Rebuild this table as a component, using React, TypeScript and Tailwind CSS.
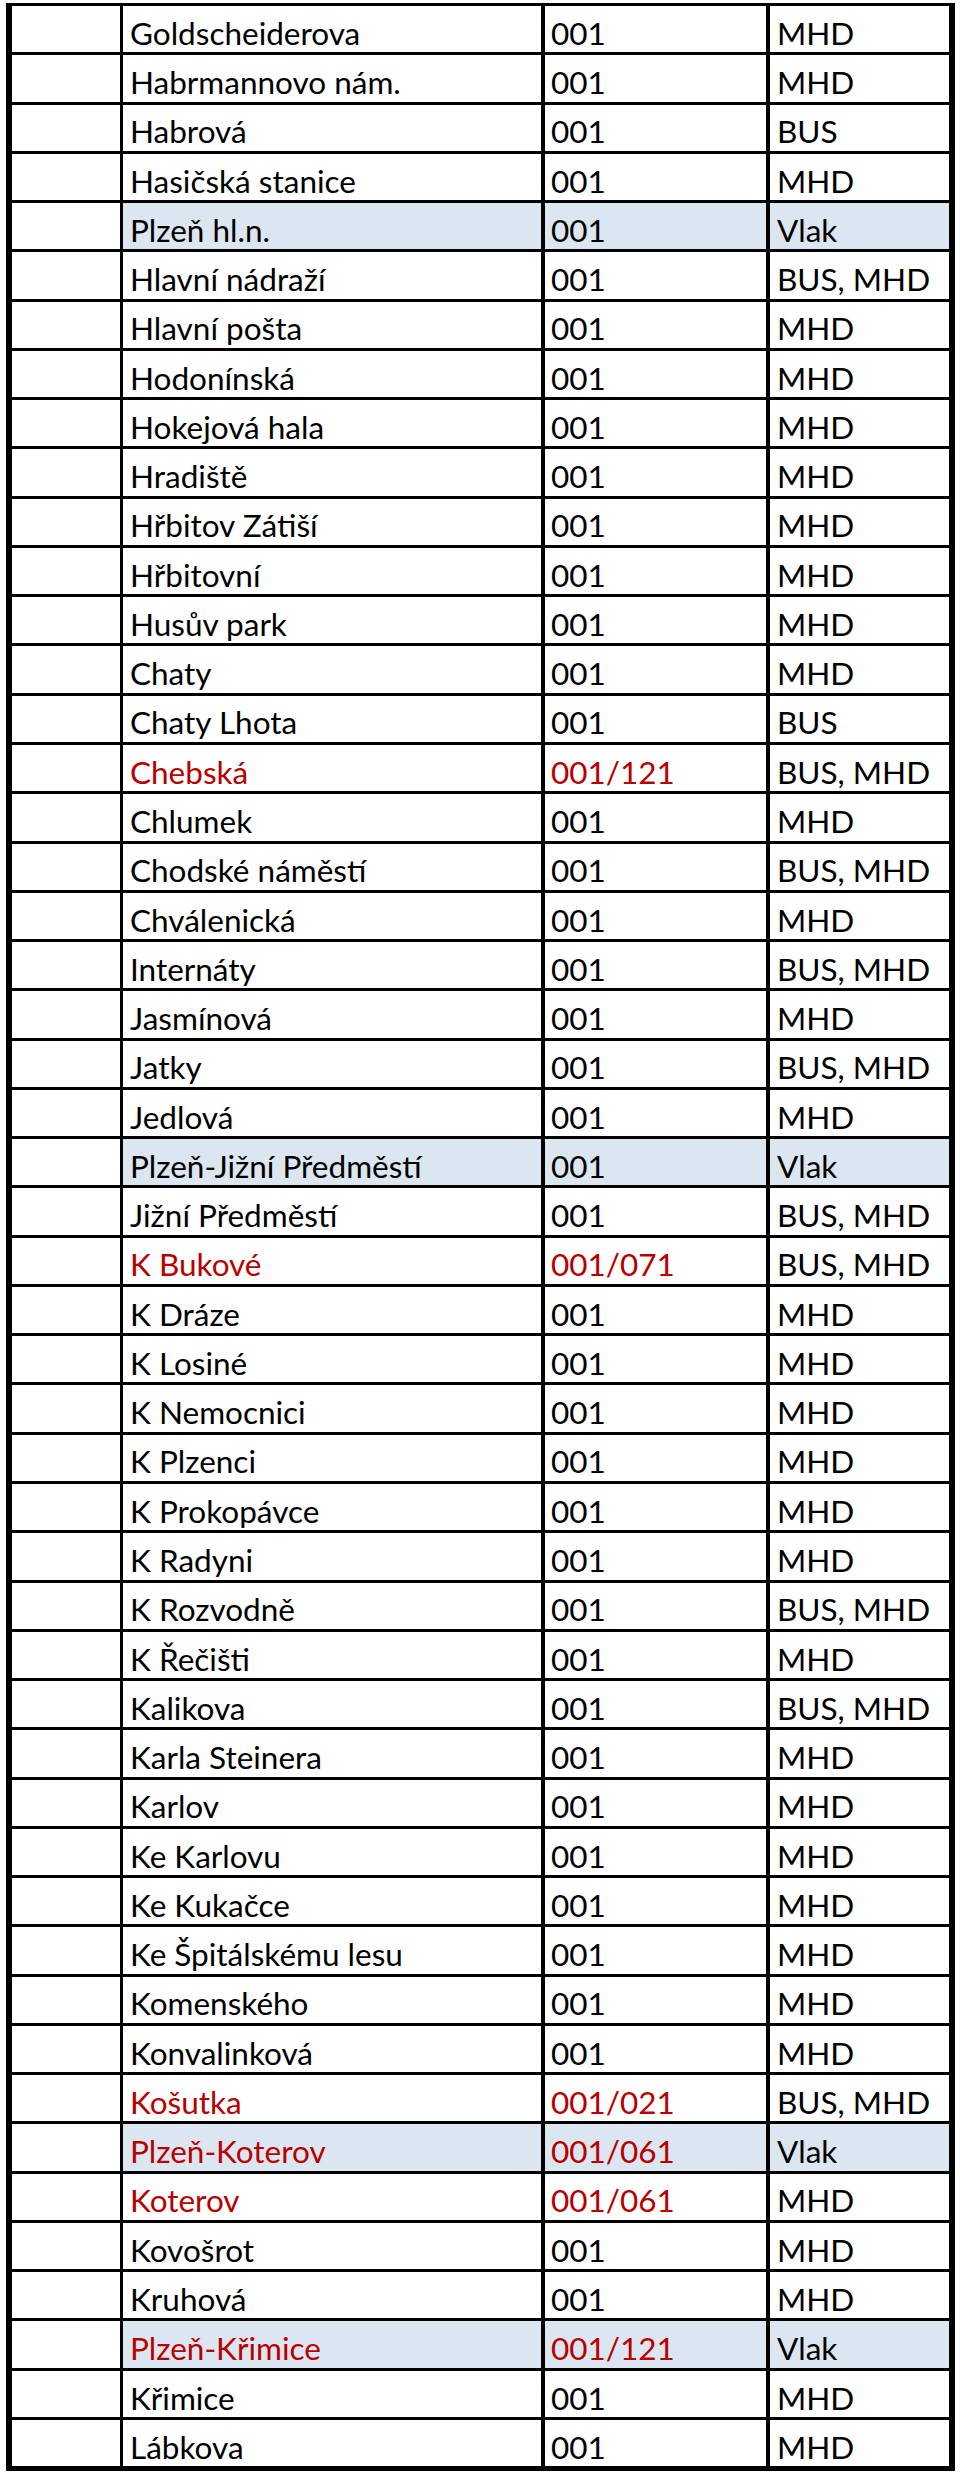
const rows: [string, string, string, number?][] = [
  ['Goldscheiderova', '001', 'MHD'],
  ['Habrmannovo nám.', '001', 'MHD'],
  ['Habrová', '001', 'BUS'],
  ['Hasičská stanice', '001', 'MHD'],
  ['Plzeň hl.n.', '001', 'Vlak', 1],
  ['Hlavní nádraží', '001', 'BUS, MHD'],
  ['Hlavní pošta', '001', 'MHD'],
  ['Hodonínská', '001', 'MHD'],
  ['Hokejová hala', '001', 'MHD'],
  ['Hradiště', '001', 'MHD'],
  ['Hřbitov Zátiší', '001', 'MHD'],
  ['Hřbitovní', '001', 'MHD'],
  ['Husův park', '001', 'MHD'],
  ['Chaty', '001', 'MHD'],
  ['Chaty Lhota', '001', 'BUS'],
  ['Chebská', '001/121', 'BUS, MHD', 2],
  ['Chlumek', '001', 'MHD'],
  ['Chodské náměstí', '001', 'BUS, MHD'],
  ['Chválenická', '001', 'MHD'],
  ['Internáty', '001', 'BUS, MHD'],
  ['Jasmínová', '001', 'MHD'],
  ['Jatky', '001', 'BUS, MHD'],
  ['Jedlová', '001', 'MHD'],
  ['Plzeň-Jižní Předměstí', '001', 'Vlak', 1],
  ['Jižní Předměstí', '001', 'BUS, MHD'],
  ['K Bukové', '001/071', 'BUS, MHD', 2],
  ['K Dráze', '001', 'MHD'],
  ['K Losiné', '001', 'MHD'],
  ['K Nemocnici', '001', 'MHD'],
  ['K Plzenci', '001', 'MHD'],
  ['K Prokopávce', '001', 'MHD'],
  ['K Radyni', '001', 'MHD'],
  ['K Rozvodně', '001', 'BUS, MHD'],
  ['K Řečišti', '001', 'MHD'],
  ['Kalikova', '001', 'BUS, MHD'],
  ['Karla Steinera', '001', 'MHD'],
  ['Karlov', '001', 'MHD'],
  ['Ke Karlovu', '001', 'MHD'],
  ['Ke Kukačce', '001', 'MHD'],
  ['Ke Špitálskému lesu', '001', 'MHD'],
  ['Komenského', '001', 'MHD'],
  ['Konvalinková', '001', 'MHD'],
  ['Košutka', '001/021', 'BUS, MHD', 2],
  ['Plzeň-Koterov', '001/061', 'Vlak', 3],
  ['Koterov', '001/061', 'MHD', 2],
  ['Kovošrot', '001', 'MHD'],
  ['Kruhová', '001', 'MHD'],
  ['Plzeň-Křimice', '001/121', 'Vlak', 3],
  ['Křimice', '001', 'MHD'],
  ['Lábkova', '001', 'MHD'],
]

// flag: 1 = blue row, 2 = red text, 3 = both
export default function App() {
  return (
    <div className="bg-white pt-[3px] pl-[6px] h-[2482px] w-[960px]">
      <div
        className="w-[949px] border-l-[6px] border-r-[6px] border-t-[3px] border-b-[2px] border-black text-black text-[31.5px]"
        style={{ fontFamily: 'Lato, "Open Sans", sans-serif' }}
      >
        {rows.map(([name, code, kind, flag = 0], i) => {
          const blue = flag === 1 || flag === 3
          const red = flag === 2 || flag === 3
          const bg = blue ? 'bg-[#dce6f1]' : 'bg-white'
          const tc = red ? 'text-[#b80000]' : 'text-black'
          return (
            <div key={i} className="grid grid-cols-[111px_422px_225px_1fr] h-[49.28px] border-b-[3px] border-black">
              <div className="border-r-[3px] border-black bg-white" />
              <div className={`border-r-[4px] border-black flex items-end pl-[7px] pb-[3px] leading-none whitespace-nowrap ${bg} ${tc}`}>
                {name}
              </div>
              <div className={`border-r-[4px] border-black flex items-end pl-[6px] pb-[3px] leading-none whitespace-nowrap ${bg} ${tc}`}>
                {code}
              </div>
              <div className={`flex items-end pl-[7px] pb-[3px] leading-none whitespace-nowrap ${bg}`}>
                {kind}
              </div>
            </div>
          )
        })}
      </div>
    </div>
  )
}
